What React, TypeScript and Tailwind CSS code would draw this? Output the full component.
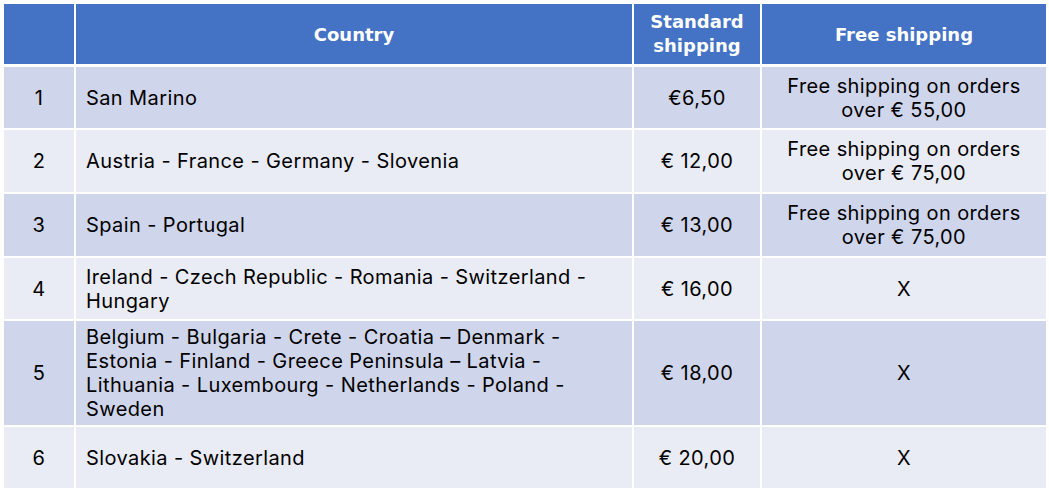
const rows = [
  { n: '1', country: 'San Marino', std: '€6,50', free: 'Free shipping on orders\nover € 55,00', h: 'h-[61px]' },
  { n: '2', country: 'Austria - France - Germany - Slovenia', std: '€ 12,00', free: 'Free shipping on orders\nover € 75,00', h: 'h-[62px]' },
  { n: '3', country: 'Spain - Portugal', std: '€ 13,00', free: 'Free shipping on orders\nover € 75,00', h: 'h-[62px]' },
  { n: '4', country: 'Ireland - Czech Republic - Romania - Switzerland -\nHungary', std: '€ 16,00', free: 'X', h: 'h-[61px]' },
  {
    n: '5',
    country:
      'Belgium - Bulgaria - Crete - Croatia – Denmark -\nEstonia - Finland - Greece Peninsula – Latvia -\nLithuania - Luxembourg - Netherlands - Poland -\nSweden',
    std: '€ 18,00',
    free: 'X',
    h: 'h-[104px]',
  },
  { n: '6', country: 'Slovakia - Switzerland', std: '€ 20,00', free: 'X', h: 'h-[61px]' },
];

export default function App() {
  return (
    <div className="w-[1049px] h-[492px] bg-white p-1 font-['Inter',sans-serif] text-black">
      <div className="grid grid-cols-[70px_556px_126px_284px] gap-x-[2px] bg-white">
        {/* header */}
        <div className="h-[60px] bg-[#4472c4]" />
        <div className="h-[60px] bg-[#4472c4] flex items-center justify-center font-['DejaVu_Sans',sans-serif] text-white font-bold text-[18px]">
          Country
        </div>
        <div className="h-[60px] bg-[#4472c4] flex items-center justify-center text-center font-['DejaVu_Sans',sans-serif] text-white font-bold text-[18px] leading-[24px]">
          Standard
          <br />
          shipping
        </div>
        <div className="h-[60px] bg-[#4472c4] flex items-center justify-center font-['DejaVu_Sans',sans-serif] text-white font-bold text-[18px]">
          Free shipping
        </div>
        <div className="col-span-4 h-[3px]" />

        {rows.map((r, i) => {
          const bg = i % 2 === 0 ? 'bg-[#cfd5ea]' : 'bg-[#e9ebf5]';
          return (
            <div key={r.n} className="contents">
              {i > 0 && <div className="col-span-4 h-[2px]" />}
              <div className={`${r.h} ${bg} flex items-center justify-center text-[20px] tracking-[0.02em]`}>{r.n}</div>
              <div className={`${r.h} ${bg} flex items-center pl-[10px] text-[20px] tracking-[0.02em] leading-[24px] whitespace-pre-line`}>
                {r.country}
              </div>
              <div className={`${r.h} ${bg} flex items-center justify-center text-[20px] tracking-[0.02em]`}>{r.std}</div>
              <div className={`${r.h} ${bg} flex items-center justify-center text-center text-[20px] tracking-[0.02em] leading-[24px] whitespace-pre-line`}>
                {r.free}
              </div>
            </div>
          );
        })}
      </div>
    </div>
  );
}
